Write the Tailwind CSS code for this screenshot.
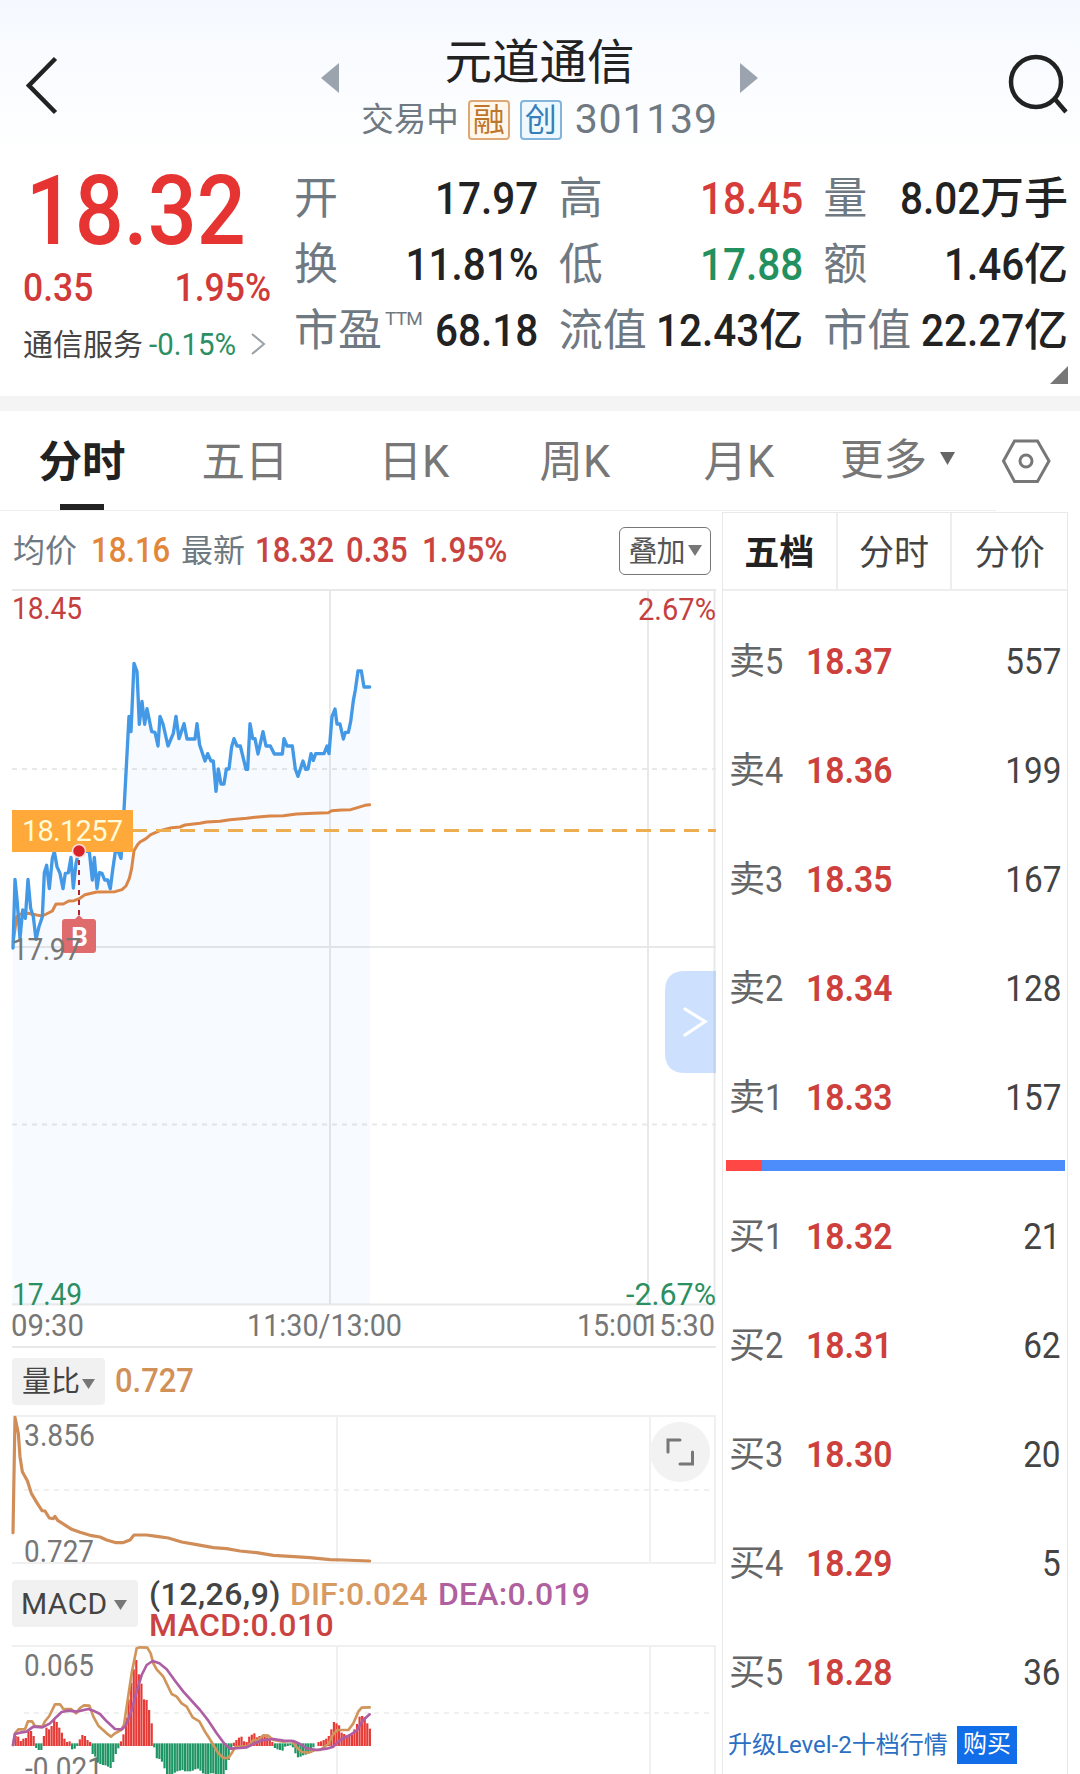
<!DOCTYPE html>
<html lang="zh-CN">
<head>
  <meta charset="UTF-8">
  <meta name="viewport" content="width=device-width, initial-scale=1.0">
  <title>元道通信 301139</title>
  <script src="https://cdn.jsdelivr.net/npm/@tailwindcss/browser@4"></script>
</head>
<body class="bg-white text-[#222] font-[Roboto,'Noto_Sans_CJK_SC',sans-serif]">
<div class="w-[1080px] h-[1774px] overflow-hidden">

  <!-- Header -->
  <header class="h-[396px] bg-linear-to-b from-[#f5f9ff] to-white to-40%">
    <div class="h-[156px] flex justify-between items-start pl-[26px] pr-[12px]">
      <svg class="w-[32px] h-[60px] mt-[56px]" viewBox="0 0 32 60" fill="none" stroke="#222" stroke-width="4.5"><path d="M29.500 2.500L3 29.500L29.500 56.500"/></svg>
      <div class="w-[438px] flex justify-between items-start ml-[15px]">
        <svg class="w-[18px] h-[30px] mt-[63px]" viewBox="0 0 18 30" fill="#9ba4ae"><path d="M18 0V30L0 15z"/></svg>
        <div class="flex flex-col items-center pt-[34px]">
          <h1 class="text-[47.5px] leading-[58px] whitespace-nowrap">元道通信</h1>
          <div class="flex items-center h-[56px] text-[#6f7982] whitespace-nowrap">
            <span class="text-[32.5px]">交易中</span>
            <span class="w-[42px] h-[40px] ml-[9px] flex items-center justify-center rounded-[4px] border-2 border-[#dea876] bg-[#fff7ec] text-[#bd762c] text-[32px] leading-none">融</span>
            <span class="w-[42px] h-[40px] ml-[10px] flex items-center justify-center rounded-[4px] border-2 border-[#82b4dc] bg-[#eff8ff] text-[#377fb9] text-[32px] leading-none">创</span>
            <span class="text-[41px] ml-[13px] tracking-[0.8px]">301139</span>
          </div>
        </div>
        <svg class="w-[18px] h-[30px] mt-[63px]" viewBox="0 0 18 30" fill="#9ba4ae"><path d="M0 0V30L18 15z"/></svg>
      </div>
      <svg class="w-[62px] h-[62px] mt-[54px]" viewBox="0 0 62 62" fill="none" stroke="#222" stroke-width="4.500"><circle cx="30" cy="28" r="25"/><path d="M48 44L60 58"/></svg>
    </div>

    <!-- Quote -->
    <div class="flex items-start">
      <div class="w-[294px] pl-[23px]">
        <div class="w-[250px] text-[97px] leading-[98px] h-[104px] pl-[3px] pt-[6px] font-medium origin-left scale-x-[.89] text-[#e63432]">18.32</div>
        <div class="flex justify-between w-[248px] h-[56px] items-center text-[39px] leading-[58px] font-medium text-[#d13a38]">
          <span class="origin-left scale-x-[.91]">0.35</span><span class="origin-right scale-x-[.91]">1.95%</span>
        </div>
        <div class="flex items-center h-[56px] whitespace-nowrap">
          <span class="text-[30px] text-[#444]">通信服务</span>
          <span class="w-[88px] text-[32px] text-[#2b8f63] ml-[6px] origin-left scale-x-[.92]">-0.15%</span>
          <svg class="w-[16px] h-[24px] ml-[13px]" viewBox="0 0 16 24" fill="none" stroke="#9ba1a8" stroke-width="2"><path d="M2 2L14 12L2 22"/></svg>
        </div>
      </div>
      <div id="stats" class="w-[774px] grid grid-cols-3 gap-x-[20px] text-[44px] leading-[66px] pt-[10px]"></div>
    </div>
    <svg class="w-[18px] h-[18px] ml-[1050px] -mt-[6px]" viewBox="0 0 18 18" fill="#777"><path d="M18 0V18H0z"/></svg>
  </header>

  <div class="h-[15px] bg-[#f4f4f4]"></div>

  <!-- Period tabs -->
  <nav class="h-[100px] flex items-center text-[43.5px] text-[#777]">
    <div class="w-[996px] h-full flex border-b border-[#eee]">
      <div class="w-[164px] flex flex-col items-center justify-end font-bold text-[#222]">
        <span class="leading-[62px] pb-[10px]">分时</span>
        <span class="w-[44px] h-[6px] bg-[#222]"></span>
      </div>
      <div class="w-[162px] text-center leading-[104px]">五日</div>
      <div class="w-[176px] text-center leading-[104px]">日K</div>
      <div class="w-[146px] text-center leading-[104px]">周K</div>
      <div class="w-[182px] text-center leading-[104px]">月K</div>
      <div class="flex items-center pl-[10px] leading-[104px]">更多
        <svg class="w-[15px] h-[13px] ml-[13px] -mt-[4px]" viewBox="0 0 15 13" fill="#666"><path d="M0 0H15L7.500 13z"/></svg>
      </div>
    </div>
    <svg class="w-[50px] h-[46px] ml-[5px]" viewBox="0 0 50 46" fill="none" stroke="#777" stroke-width="3"><path d="M13.500 3H36.500L48 23L36.500 43.500H13.500L2.500 23z"/><circle cx="25" cy="23" r="6"/></svg>
  </nav>

  <div class="flex">
    <!-- Charts -->
    <main class="w-[722px]">
      <div class="h-[78px] flex items-center pl-[13px] pt-[2px] text-[34.5px] font-medium whitespace-nowrap">
        <span class="w-[78px] text-[32px] font-normal text-[#6f7982]">均价</span>
        <span class="w-[90px] origin-left scale-x-[.9] text-[#e2873a]">18.16</span>
        <span class="w-[74px] text-[32px] font-normal text-[#6f7982]">最新</span>
        <span class="w-[91px] origin-left scale-x-[.9] text-[#c94441]">18.32</span>
        <span class="w-[76px] origin-left scale-x-[.9] text-[#c94441]">0.35</span>
        <span class="origin-left scale-x-[.91] text-[#c94441]">1.95%</span>
        <button class="ml-auto mr-[11px] w-[92px] h-[48px] flex items-center justify-center gap-[3px] rounded-[6px] border-[1.5px] border-[#777] pt-[3px] text-[29px] font-normal tracking-[-1px] text-[#555]">叠加
          <svg class="w-[14px] h-[11px] -mt-[4px]" viewBox="0 0 14 11" fill="#777"><path d="M0 0H14L7 11z"/></svg>
        </button>
      </div>

      <!-- Intraday price -->
      <svg class="block w-[722px] h-[760px]" viewBox="0 589 722 760">
        <g fill="none" stroke="#e7e9e8" stroke-width="2">
          <path d="M12 590H716M12 947H716M12 1304.500H716M12 1347H716M330 590V1304M648 590V1304M714.500 590V1304"/>
          <path stroke-dasharray="5 5" d="M12 769H716M12 1124.500H716"/>
        </g>
        <g transform="translate(0 580) scale(.33333)" fill="none" stroke-width="9" stroke-linejoin="round" stroke-linecap="round">
          <path id="area" fill="#3b8ff0" fill-opacity=".045" stroke="none"/>
          <path stroke="#d98648" d="M40 1085L50 1010L60 1003L85 1000L110 1005L127 1008L157 993L168 972L190 972L206 963L222 962L240 955L255 944L290 936L345 935L366 929L378 918L388 895L395 865L402 812L412 795L420 786L438 776L452 764L480 752L515 743L540 741L555 735L600 730L620 726L660 724L690 719L740 715L765 712L810 708L850 707L890 702L940 700L985 698L995 692L1025 690L1052 689L1075 682L1095 676L1109 674"/>
          <path id="price" stroke="#4399e6" stroke-width="10" d="M39 1104L45 898L51 958L60 1075L68 990L76 1015L84 898L92 985L100 1010L108 1078L117 1040L127 1010L133 878L140 856L148 926L157 835L163 815L171 860L180 880L189 926L196 880L205 878L213 832L220 924L228 850L237 812L268 815L277 900L283 832L291 925L298 878L306 880L314 900L323 900L331 926L338 870L346 815L355 815L363 835L372 690L379 560L387 409L393 455L402 250L411 275L418 433L426 364L434 433L441 386L455 455L465 457L474 498L480 409L489 432L504 498L520 460L528 409L537 476L552 431L561 477L585 477L591 431L599 495L615 543L623 521L633 543L640 543L648 634L655 567L663 612L672 612L679 567L687 567L695 500L702 476L711 498L721 498L738 568L743 568L750 431L758 476L765 476L774 522L789 455L798 498L811 498L823 522L847 522L852 476L861 498L877 498L886 567L894 589L909 543L917 568L924 567L933 521L940 541L947 521L972 521L981 498L987 521L996 410L1005 387L1011 432L1020 432L1030 477L1036 457L1045 457L1052 425L1060 362L1066 330L1074 273L1084 273L1092 321L1109 321"/>
        </g>
        <path d="M132 830.500H716" stroke="#ecae50" stroke-width="2.800" stroke-dasharray="15 9"/>
        <rect x="12" y="810" width="121" height="42" fill="#ffa93a"/>
        <text x="22" y="841" font-size="29" fill="#fffbd8" textLength="101">18.1257</text>
        <!-- Buy marker -->
        <path d="M79 860V916" stroke="#b3262c" stroke-width="2" stroke-dasharray="5 5"/>
        <circle cx="79" cy="851" r="6.500" fill="#d8232a" stroke="#fbe0dc" stroke-width="1.500"/>
        <path d="M65 919H75L79 915L83 919H93Q96 919 96 922V950Q96 953 93 953H65Q62 953 62 950V922Q62 919 65 919z" fill="#e06b6d"/>
        <text x="79.500" y="946" font-size="26" font-weight="700" fill="#fff" text-anchor="middle">B</text>
        <g font-size="31">
          <g transform="translate(12 0) scale(.91 1)">
            <text x="0" y="619" fill="#c4403e" textLength="77">18.45</text>
            <text x="0" y="960" fill="#777" textLength="76">17.97</text>
            <text x="0" y="1305" fill="#2b8f63" textLength="77">17.49</text>
          </g>
          <text x="638" y="620" fill="#c4403e" textLength="78" lengthAdjust="spacingAndGlyphs">2.67%</text>
          <text x="626" y="1305" fill="#2b8f63" textLength="90" lengthAdjust="spacingAndGlyphs">-2.67%</text>
          <g fill="#777">
            <text x="11" y="1336" textLength="73" lengthAdjust="spacingAndGlyphs">09:30</text>
            <text x="247" y="1336" textLength="155" lengthAdjust="spacingAndGlyphs">11:30/13:00</text>
            <text x="577" y="1336" textLength="71" lengthAdjust="spacingAndGlyphs">15:00</text>
            <text x="643" y="1336" textLength="72" lengthAdjust="spacingAndGlyphs">15:30</text>
          </g>
        </g>
        <path d="M716 971H685Q665 971 665 991V1053Q665 1073 685 1073H716z" fill="#5f9dff" fill-opacity=".31"/>
        <path d="M685 1009L705 1021.500L685 1035" fill="none" stroke="#fff" stroke-width="3.200" stroke-linecap="round"/>
      </svg>

      <!-- Volume ratio -->
      <div class="h-[66px] flex items-start pl-[12px] pt-[9px]">
        <div class="w-[93px] h-[47px] flex items-center pl-[10px] pt-[2px] rounded-[4px] bg-[#f1f1f1] text-[29px] text-[#444]">量比
          <svg class="w-[13px] h-[10px] ml-[2px] mt-[2px]" viewBox="0 0 13 10" fill="#777"><path d="M0 0H13L6.500 10z"/></svg>
        </div>
        <span class="ml-[10px] text-[34px] leading-[44px] font-medium origin-left scale-x-[.91] text-[#d09058]">0.727</span>
      </div>
      <svg class="block w-[722px] h-[150px]" viewBox="0 1415 722 150">
        <g fill="none" stroke="#f0f0f0" stroke-width="2">
          <path d="M12 1416H716M12 1563H716M337 1416V1563M650 1416V1563M715 1416V1563"/>
          <path stroke-dasharray="5 5" d="M24 1490H716"/>
        </g>
        <text x="24" y="1446" font-size="31" fill="#777" textLength="71" lengthAdjust="spacingAndGlyphs">3.856</text>
        <text x="24" y="1562" font-size="31" fill="#777" textLength="70" lengthAdjust="spacingAndGlyphs">0.727</text>
        <path transform="translate(0 1270) scale(.33333)" fill="none" stroke="#d08d58" stroke-width="9.500" stroke-linejoin="round" stroke-linecap="round" d="M39 788L45 442L55 490L60 560L67 605L82 632L94 670L110 697L126 722L135 723L148 744L160 746L165 739L173 751L215 778L240 787L275 797L300 801L320 810L348 818L368 818L390 810L402 795L440 795L470 799L505 804L545 816L590 824L640 833L680 836L720 843L770 848L820 856L870 859L930 863L990 869L1030 870L1109 873"/>
        <circle cx="680" cy="1452" r="30" fill="#f2f2f2"/>
        <path d="M668 1452V1440H680M692.500 1452V1464H680" fill="none" stroke="#777" stroke-width="3" stroke-linecap="round"/>
      </svg>

      <!-- MACD -->
      <div class="h-[80px] flex items-start pl-[12px] pt-[15px]">
        <div class="w-[126px] h-[47px] flex items-center pl-[9px] rounded-[4px] bg-[#f1f1f1] text-[30px] tracking-[0.4px] text-[#444]">MACD
          <svg class="w-[13px] h-[10px] ml-[6px] mt-[3px]" viewBox="0 0 13 10" fill="#777"><path d="M0 0H13L6.500 10z"/></svg>
        </div>
        <div class="ml-[11px] -mt-[1px] text-[32px] leading-[31px] whitespace-nowrap">
          <div class="flex">
            <span class="w-[141px] font-medium tracking-[0.5px] text-[#444]">(12,26,9)</span>
            <span class="w-[148px] tracking-[0px] font-medium text-[#d79a62]">DIF:0.024</span>
            <span class="tracking-[0.2px] font-medium text-[#b0609e]">DEA:0.019</span>
          </div>
          <div class="tracking-[0.4px] font-medium text-[#cb4341]">MACD:0.010</div>
        </div>
      </div>
      <svg class="block w-[722px] h-[129px]" viewBox="0 1645 722 129">
        <g fill="none" stroke="#f0f0f0" stroke-width="2">
          <path d="M12 1646H716M337 1646V1774M650 1646V1774M715 1646V1774"/>
          <path stroke-dasharray="5 5" d="M24 1713H716"/>
        </g>
        <text x="24" y="1676" font-size="31" fill="#777" textLength="70" lengthAdjust="spacingAndGlyphs">0.065</text>
        <text x="25" y="1779" font-size="31" fill="#777" textLength="78" lengthAdjust="spacingAndGlyphs">-0.021</text>
        <g transform="translate(0 1560) scale(.33333)" fill="none" stroke-width="8" stroke-linejoin="round" stroke-linecap="round">
          <g id="bars" stroke="none"></g>
          <path stroke="#d0955a" d="M39 555L45 520L55 508L75 508L84 484L96 484L105 498L127 500L135 484L148 468L165 433L180 433L190 447L213 447L228 460L240 444L252 436L268 437L280 470L295 497L320 520L333 530L345 520L363 510L372 495L380 440L395 340L410 265L420 262L442 263L452 280L460 310L470 328L490 350L515 402L530 410L545 430L560 440L578 472L598 484L615 515L628 535L640 555L655 580L670 594L685 594L695 580L705 562L725 560L745 558L760 540L775 540L790 526L805 527L820 540L850 545L875 543L890 562L905 576L925 578L945 570L960 570L985 552L1000 522L1012 510L1045 510L1060 490L1075 455L1085 443L1109 442"/>
          <path stroke="#ae5fa3" d="M39 555L45 522L60 518L80 515L100 500L127 502L150 490L170 470L185 456L205 452L230 455L265 447L280 452L300 462L320 484L345 507L366 508L378 495L395 450L410 395L425 345L440 315L458 303L478 310L500 328L525 362L550 395L600 450L625 482L650 520L672 550L690 566L720 564L740 562L760 552L785 541L820 537L850 542L880 543L900 552L920 565L950 570L980 566L1000 560L1020 540L1050 525L1070 512L1090 480L1109 463"/>
        </g>
      </svg>
    </main>

    <!-- Order book -->
    <aside class="w-[346px] h-[1262px] mt-[1px] border-x-[1.5px] border-t-[1.5px] border-[#e8e8e8]">
      <div class="h-[78px] grid grid-cols-3 divide-x-2 divide-[#eee] border-b-2 border-[#eee] text-[35px] leading-[82px] text-center text-[#444]">
        <div class="h-[76px] font-bold text-[#222]">五档</div>
        <div class="h-[76px]">分时</div>
        <div class="h-[76px]">分价</div>
      </div>
      <div id="asks" class="pt-[15px]"></div>
      <div class="flex h-[11px] mt-[9px] ml-[3px] w-[339px] bg-[#4c8cfb]"><div class="w-[36px] bg-[#ff4845]"></div></div>
      <div id="bids" class="pt-[10px]"></div>
      <div class="flex items-center h-[38px] pl-[5px] text-[24px] text-[#2a6fc4] whitespace-nowrap">
        <span class="w-[229px]">升级Level-2十档行情</span>
        <span class="w-[60px] h-[38px] leading-[37px] text-center bg-[#126ee8] text-white">购买</span>
      </div>
    </aside>
  </div>
</div>

<script>
  const stats = [
    ['开', '17.97', '', 'text-[#222]'], ['高', '18.45', '', 'text-[#d63c3a]'], ['量', '8.02', '万手', 'text-[#222]'],
    ['换', '11.81%', '', 'text-[#222]'], ['低', '17.88', '', 'text-[#23905f]'], ['额', '1.46', '亿', 'text-[#222]'],
    ['市盈', '68.18', '', 'text-[#222]'], ['流值', '12.43', '亿', 'text-[#222]'], ['市值', '22.27', '亿', 'text-[#222]'],
  ];
  document.getElementById('stats').innerHTML = stats.map(([label, value, unit, color]) => `
    <div class="flex h-[66px] whitespace-nowrap">
      <span class="flex text-[#6f7982]">${label}${label === '市盈' ? '<span class="text-[19px] leading-[42px] ml-[3px] tracking-[-0.8px]">TTM</span>' : ''}</span>
      <span class="flex flex-1 justify-end font-medium ${color}"><span class="origin-right scale-x-[.92]">${value}</span>${unit}</span>
    </div>`).join('');

  const row = ([name, price, qty]) => `
    <div class="h-[109px] flex items-center pl-[6px] pr-[6px] pt-[2px] text-[37px] leading-none">
      <span class="w-[77px] text-[36px] text-[#666]">${name[0]}<span class="inline-block text-[37px] origin-left scale-x-[.88]">${name[1]}</span></span>
      <span class="font-semibold origin-left scale-x-[.91] text-[#cd403c]">${price}</span>
      <span class="ml-auto origin-right scale-x-[.9] text-[#444]">${qty}</span>
    </div>`;
  const asks = [['卖5', '18.37', 557], ['卖4', '18.36', 199], ['卖3', '18.35', 167], ['卖2', '18.34', 128], ['卖1', '18.33', 157]];
  const bids = [['买1', '18.32', 21], ['买2', '18.31', 62], ['买3', '18.30', 20], ['买4', '18.29', 5], ['买5', '18.28', 36]];
  document.getElementById('asks').innerHTML = asks.map(row).join('');
  document.getElementById('bids').innerHTML = bids.map(row).join('');

  // fill under the price line
  const line = document.getElementById('price').getAttribute('d');
  document.getElementById('area').setAttribute('d', line + 'L1109 2172L36 2172z');

  // MACD histogram, one bar per minute
  const macd = [0,30,28,15,22,24,45,45,30,-14,-20,-20,30,55,50,60,80,72,55,40,22,12,14,-18,-16,-8,20,33,30,18,12,-32,-40,-58,-62,-65,-66,-70,-74,-56,-32,-15,14,35,85,140,190,230,258,215,187,140,138,108,68,-12,-45,-47,-55,-75,-92,-95,-92,-88,-84,-82,-80,-84,-84,-84,-82,-78,-76,-82,-90,-92,-92,-90,-90,-92,-92,-92,-92,-80,-50,-20,10,18,25,28,14,12,28,34,38,26,30,28,32,26,20,12,-14,-18,-20,-22,-10,-8,-6,-12,-30,-42,-40,-36,-34,-30,-28,-12,0,12,14,18,22,30,50,72,68,62,40,36,32,30,34,50,66,88,90,86,68,52];
  document.getElementById('bars').innerHTML = macd.map((v, i) => {
    const x = 36 + i * 7.7;
    return v >= 0
      ? `<rect x="${x}" y="${558 - v}" width="6.6" height="${v}" fill="#e63a36"/>`
      : `<rect x="${x}" y="550" width="6.6" height="${-v}" fill="#1e9564"/>`;
  }).join('');
</script>
</body>
</html>
